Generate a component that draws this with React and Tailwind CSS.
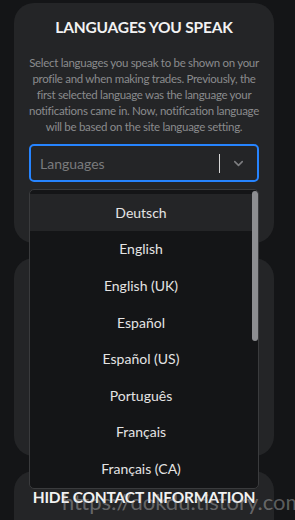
import { ChevronDown } from "lucide-react";

const languages = [
  "Deutsch",
  "English",
  "English (UK)",
  "Español",
  "Español (US)",
  "Português",
  "Français",
  "Français (CA)",
  "Italiano",
];

export default function App() {
  return (
    <div
      className="relative h-[520px] overflow-hidden bg-[#141517] pt-[3px]"
      style={{ fontFamily: "Lato, 'Noto Sans', sans-serif" }}
    >
      <div className="ml-[14px] mr-[21px] flex flex-col gap-[15px]">
        {/* Languages card */}
        <div className="relative h-[240px] rounded-[20px] bg-[#242527] px-[15px] pt-[12px]">
          <h2 className="text-center text-[15.5px] font-bold leading-[24px] tracking-[-0.2px] text-[#f2f2f2]">
            LANGUAGES YOU SPEAK
          </h2>
          <p className="-mx-[6px] mt-[16px] whitespace-nowrap text-center text-[11.5px] leading-[16px] tracking-[-0.3px] text-[#8a8b8d]">
            Select languages you speak to be shown on your
            <br />
            profile and when making trades. Previously, the
            <br />
            first selected language was the language your
            <br />
            notifications came in. Now, notification language
            <br />
            will be based on the site language setting.
          </p>

          <div className="relative mt-[9px]">
            <div className="flex h-[38px] items-center rounded-[5px] border-2 border-[#2684ff] bg-[#242527] pl-[9px]">
              <span className="flex-1 text-[14px] text-[#7a7b7d]">Languages</span>
              <span className="h-[19px] w-px bg-[#d8d8d8]" />
              <ChevronDown className="mx-[11px] h-[15px] w-[15px] text-[#7d7e80]" strokeWidth={2.5} />
            </div>

            {/* dropdown menu */}
            <div className="absolute left-0 right-0 top-[45px] z-10 h-[300px] overflow-hidden rounded-[5px] border border-[#3a3b3d] bg-[#141517] pt-[4px]">
              <div className="pr-[6px]">
                {languages.map((lang, i) => (
                  <div
                    key={lang}
                    className={`flex h-[36.6px] items-center justify-center text-[14px] text-[#e4e4e4] ${
                      i === 0 ? "bg-[#242527]" : ""
                    }`}
                  >
                    {lang}
                  </div>
                ))}
              </div>
              <div className="absolute right-0 top-[1px] h-[150px] w-[6px] rounded-full bg-[#8d8e91]" />
            </div>
          </div>
        </div>

        {/* second card (covered by menu) */}
        <div className="h-[198px] rounded-[20px] bg-[#242527]" />

        {/* hide contact card */}
        <div className="h-[100px] rounded-[20px] bg-[#242527] pt-[14px]">
          <h2 className="text-center text-[15.5px] font-bold leading-[24px] tracking-[-0.2px] text-[#f2f2f2]">
            HIDE CONTACT INFORMATION
          </h2>
        </div>
      </div>

      {/* watermark */}
      <div className="pointer-events-none absolute left-[62px] top-[488px] z-20 whitespace-nowrap text-[22px] leading-[28px] text-[#d0d0d0]/40">
        https://dokdu.tistory.com
      </div>
    </div>
  );
}
